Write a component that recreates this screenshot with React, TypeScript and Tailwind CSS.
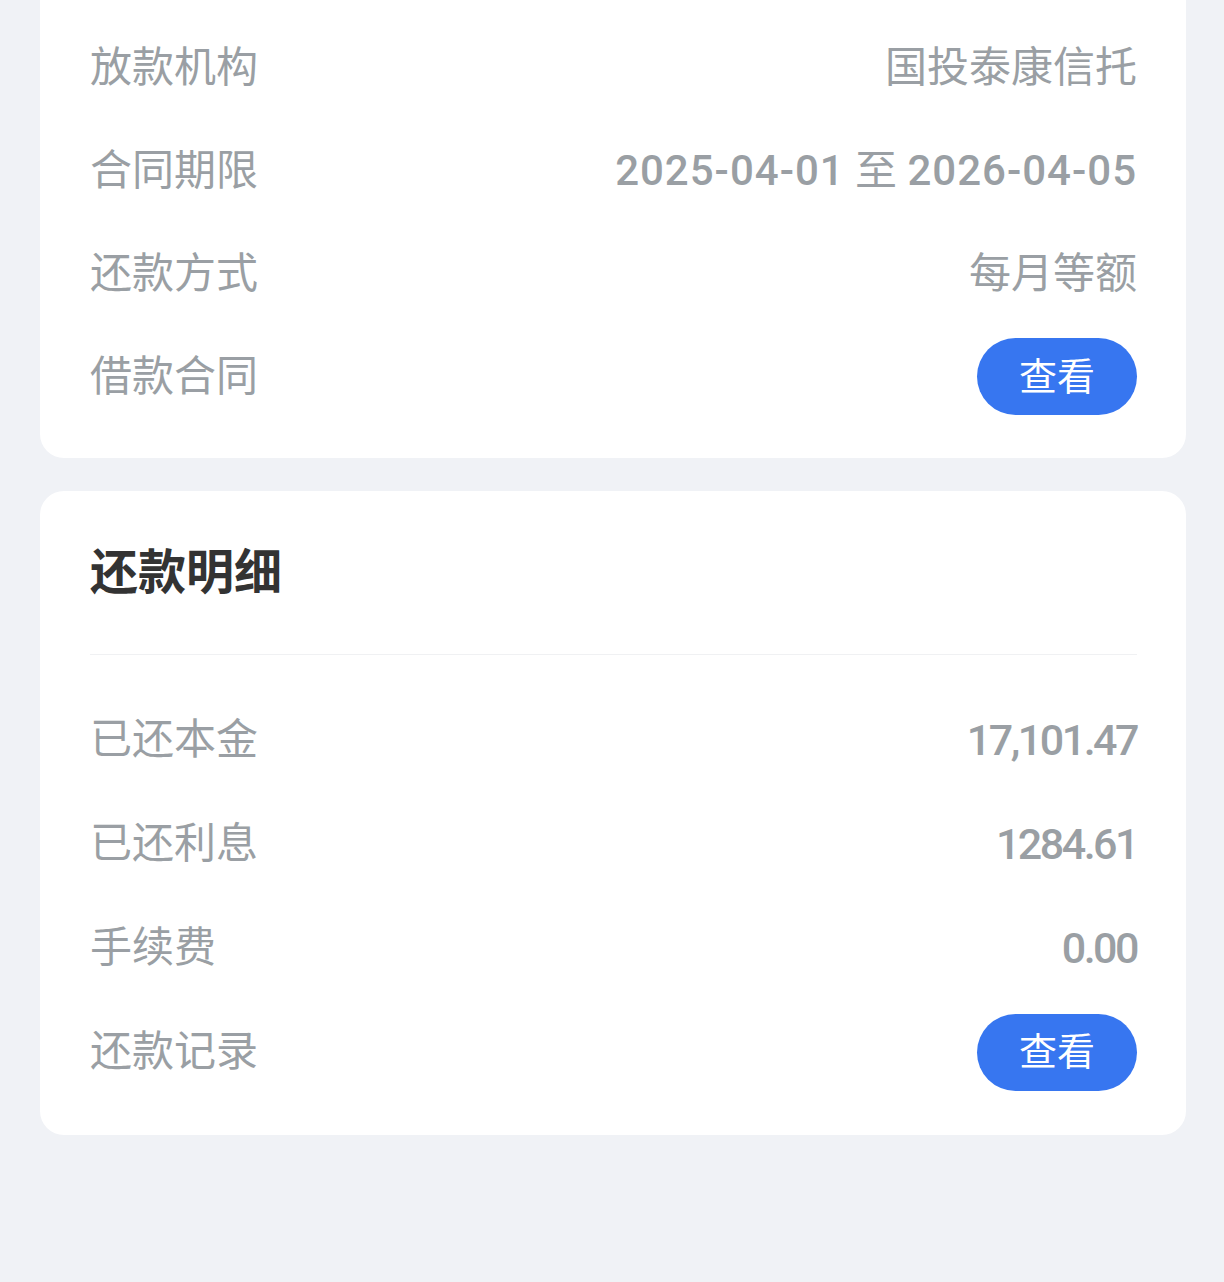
import React from 'react';

const font = { fontFamily: 'Roboto, "Noto Sans CJK SC", sans-serif' };

function Row({
  label,
  value,
  button,
  tall,
  num,
}: {
  label: string;
  value?: string;
  button?: boolean;
  tall?: boolean;
  num?: boolean;
}) {
  return (
    <div className={tall ? 'flex h-[104px] items-center justify-between' : 'flex h-[103px] items-center justify-between'}>
      <span className="text-[42px] leading-none text-[#9a9fa4]">{label}</span>
      {button ? (
        <button className="flex h-[77px] w-[160px] items-center justify-center rounded-full bg-[#3776f0] text-[38px] leading-none text-white">
          查看
        </button>
      ) : (
        <span
          className={
            num
              ? 'text-[43px] font-medium leading-none tracking-[-2.5px] text-[#9a9fa4]'
              : 'text-[42px] leading-none text-[#9a9fa4]'
          }
        >
          {value}
        </span>
      )}
    </div>
  );
}

export default function App() {
  return (
    <div className="min-h-[1282px] bg-[#f0f2f6] pl-[40px] pr-[38px]" style={font}>
      {/* loan info card (top cut off) */}
      <div className="rounded-b-[24px] bg-white pl-[50px] pr-[49px] pt-[16px] pb-[30px]">
        <Row label="放款机构" value="国投泰康信托" />
        <div className="flex h-[103px] items-center justify-between">
          <span className="text-[42px] leading-none text-[#9a9fa4]">合同期限</span>
          <span className="text-[42px] leading-none text-[#9a9fa4]">
            <span className="font-medium tracking-[1px]">2025-04-01</span> 至{' '}
            <span className="font-medium tracking-[1px]">2026-04-05</span>
          </span>
        </div>
        <Row label="还款方式" value="每月等额" />
        <Row label="借款合同" button />
      </div>

      {/* repayment details */}
      <div className="mt-[33px] rounded-[24px] bg-white pl-[50px] pr-[49px] pb-[31px]">
        <div className="flex h-[164px] items-center border-b border-[#f0f1f3]">
          <h2 className="text-[48px] font-bold leading-none text-[#333333]">还款明细</h2>
        </div>
        <div className="pt-[33px]">
          <Row label="已还本金" value="17,101.47" tall num />
          <Row label="已还利息" value="1284.61" tall num />
          <Row label="手续费" value="0.00" tall num />
          <Row label="还款记录" button tall />
        </div>
      </div>
    </div>
  );
}
